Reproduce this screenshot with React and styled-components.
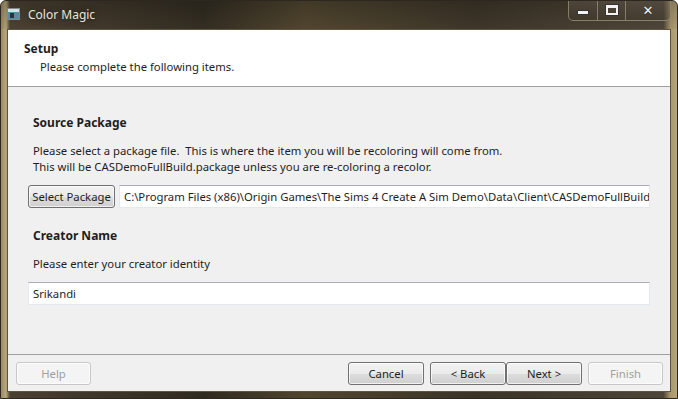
import styled, { createGlobalStyle } from "styled-components";

const Global = createGlobalStyle`
  html, body { margin: 0; padding: 0; }
  body {
    width: 678px;
    height: 399px;
    overflow: hidden;
    font-family: "Noto Sans", "Open Sans", sans-serif;
    font-size: 11.3px;
    color: #1e1e1e;
  }
`;

const Window = styled.div`
  width: 678px;
  height: 399px;
  box-sizing: border-box;
  display: flex;
  flex-direction: column;
  background: linear-gradient(90deg, #9c8a62 0px, #b9a87c 5px, #4a4032 9px, #2f2a20 30%, #50452e 45%, #3a3327 70%, #4d4538 98%, #a8966c 99%, #b8a67a 100%);
  border: 1px solid #2c2820;
  border-radius: 6px 6px 0 0;
  overflow: hidden;
`;

const TitleBar = styled.div`
  height: 28px;
  flex: none;
  display: flex;
  align-items: flex-start;
  position: relative;
  background: linear-gradient(180deg, rgba(20, 18, 14, 0.25), rgba(90, 78, 56, 0.1));
`;

const AppIcon = styled.div`
  width: 13px;
  height: 12px;
  margin: 7px 0 0 6px;
  border: 1px solid #7d8a8e;
  background: linear-gradient(180deg, #d7e1e6 0 3px, #5b8aa0 3px 100%);
  box-sizing: border-box;
  position: relative;
  &::after {
    content: "";
    position: absolute;
    left: 2px;
    top: 4px;
    width: 4px;
    height: 5px;
    background: #26353d;
  }
`;

const Title = styled.div`
  margin: 5px 0 0 8px;
  color: #e8e4da;
  font-size: 12px;
  text-shadow: 0 0 6px rgba(0, 0, 0, 0.6);
`;

const Controls = styled.div`
  position: absolute;
  top: -1px;
  right: 6px;
  display: flex;
  height: 20px;
  border: 1px solid rgba(150, 140, 120, 0.8);
  border-top: none;
  border-radius: 0 0 5px 5px;
  overflow: hidden;
  background: linear-gradient(180deg, rgba(120, 110, 95, 0.35), rgba(60, 52, 40, 0.3));
`;

const CtrlButton = styled.div`
  width: ${(p) => p.w}px;
  height: 20px;
  display: flex;
  align-items: center;
  justify-content: center;
  border-left: ${(p) => (p.first ? "none" : "1px solid rgba(150, 140, 120, 0.8)")};
  box-sizing: border-box;
`;

const MinGlyph = styled.div`
  width: 10px;
  height: 3px;
  margin-top: 4px;
  background: #f2f2f2;
  border: 1px solid #333;
`;

const MaxGlyph = styled.div`
  width: 8px;
  height: 5px;
  border: 2px solid #f2f2f2;
  border-top-width: 3px;
  box-shadow: 0 0 0 1px #333;
`;

const CloseGlyph = styled.div`
  color: #f4f4f4;
  font-weight: bold;
  font-size: 13px;
  font-family: "DejaVu Sans", sans-serif;
  text-shadow: 0 0 1px #222;
  line-height: 1;
`;

const Client = styled.div`
  flex: 1;
  margin: 0 6px 6px 6px;
  display: flex;
  flex-direction: column;
  border: 1px solid #5e5444;
  background: #f0f0f0;
`;

const Header = styled.div`
  height: 57px;
  flex: none;
  box-sizing: border-box;
  background: #ffffff;
  border-bottom: 1px solid #a0a0a0;
  padding: 10px 0 0 16px;
`;

const HeaderTitle = styled.div`
  font-weight: bold;
  font-size: 12px;
  line-height: 18px;
`;

const HeaderSub = styled.div`
  padding-left: 16px;
  line-height: 17px;
`;

const Body = styled.div`
  flex: 1;
  padding: 28px 20px 0 25px;
  display: flex;
  flex-direction: column;
`;

const SectionTitle = styled.div`
  font-weight: bold;
  font-size: 12px;
  line-height: 16px;
  margin-bottom: ${(p) => p.gap}px;
`;

const Text = styled.div`
  line-height: 16px;
  white-space: nowrap;
  margin-bottom: ${(p) => p.gap || 0}px;
`;

const FieldRow = styled.div`
  display: flex;
  align-items: center;
  gap: 4px;
  margin-left: -5px;
  margin-bottom: ${(p) => p.gap || 0}px;
`;

const Button = styled.div`
  width: ${(p) => p.w || 75}px;
  height: 23px;
  box-sizing: border-box;
  display: flex;
  align-items: center;
  justify-content: center;
  border: 1px solid ${(p) => (p.disabled ? "#c8c8c8" : "#707070")};
  border-radius: 3px;
  color: ${(p) => (p.disabled ? "#a0a0a0" : "#1e1e1e")};
  background: ${(p) =>
    p.disabled
      ? "#f4f4f4"
      : "linear-gradient(180deg, #f2f2f2 0%, #ebebeb 50%, #dddddd 51%, #cfcfcf 100%)"};
  box-shadow: inset 0 0 0 1px rgba(255, 255, 255, 0.7);
  white-space: nowrap;
`;

const Field = styled.div`
  flex: 1;
  min-width: 0;
  height: 23px;
  box-sizing: border-box;
  display: flex;
  align-items: center;
  padding: 0 4px;
  background: #ffffff;
  border: 1px solid #e3e9ef;
  border-top-color: #abadb3;
  white-space: nowrap;
  overflow: hidden;
`;

const Footer = styled.div`
  height: 36px;
  flex: none;
  border-top: 1px solid #a0a0a0;
  display: flex;
  align-items: center;
  padding: 0 7px 0 8px;
`;

const Spacer = styled.div`
  flex: 1;
`;

const ButtonGroup = styled.div`
  display: flex;
  margin-left: ${(p) => p.ml || 0}px;
`;

export default function App() {
  return (
    <>
      <Global />
      <Window>
        <TitleBar>
          <AppIcon />
          <Title>Color Magic</Title>
          <Controls>
            <CtrlButton w={28} first>
              <MinGlyph />
            </CtrlButton>
            <CtrlButton w={28}>
              <MaxGlyph />
            </CtrlButton>
            <CtrlButton w={45}>
              <CloseGlyph>✕</CloseGlyph>
            </CtrlButton>
          </Controls>
        </TitleBar>
        <Client>
          <Header>
            <HeaderTitle>Setup</HeaderTitle>
            <HeaderSub>Please complete the following items.</HeaderSub>
          </Header>
          <Body>
            <SectionTitle gap={12}>Source Package</SectionTitle>
            <Text>Please select a package file.&nbsp; This is where the item you will be recoloring will come from.</Text>
            <Text gap={10}>This will be CASDemoFullBuild.package unless you are re-coloring a recolor.</Text>
            <FieldRow gap={20}>
              <Button w={87}>Select Package</Button>
              <Field>C:\Program Files (x86)\Origin Games\The Sims 4 Create A Sim Demo\Data\Client\CASDemoFullBuild.package</Field>
            </FieldRow>
            <SectionTitle gap={12}>Creator Name</SectionTitle>
            <Text gap={10}>Please enter your creator identity</Text>
            <FieldRow>
              <Field>Srikandi</Field>
            </FieldRow>
          </Body>
          <Footer>
            <Button w={75} disabled>Help</Button>
            <Spacer />
            <Button w={76}>Cancel</Button>
            <ButtonGroup ml={6}>
              <Button w={76}>&lt; Back</Button>
              <Button w={76}>Next &gt;</Button>
            </ButtonGroup>
            <ButtonGroup ml={6}>
              <Button w={75} disabled>Finish</Button>
            </ButtonGroup>
          </Footer>
        </Client>
      </Window>
    </>
  );
}
